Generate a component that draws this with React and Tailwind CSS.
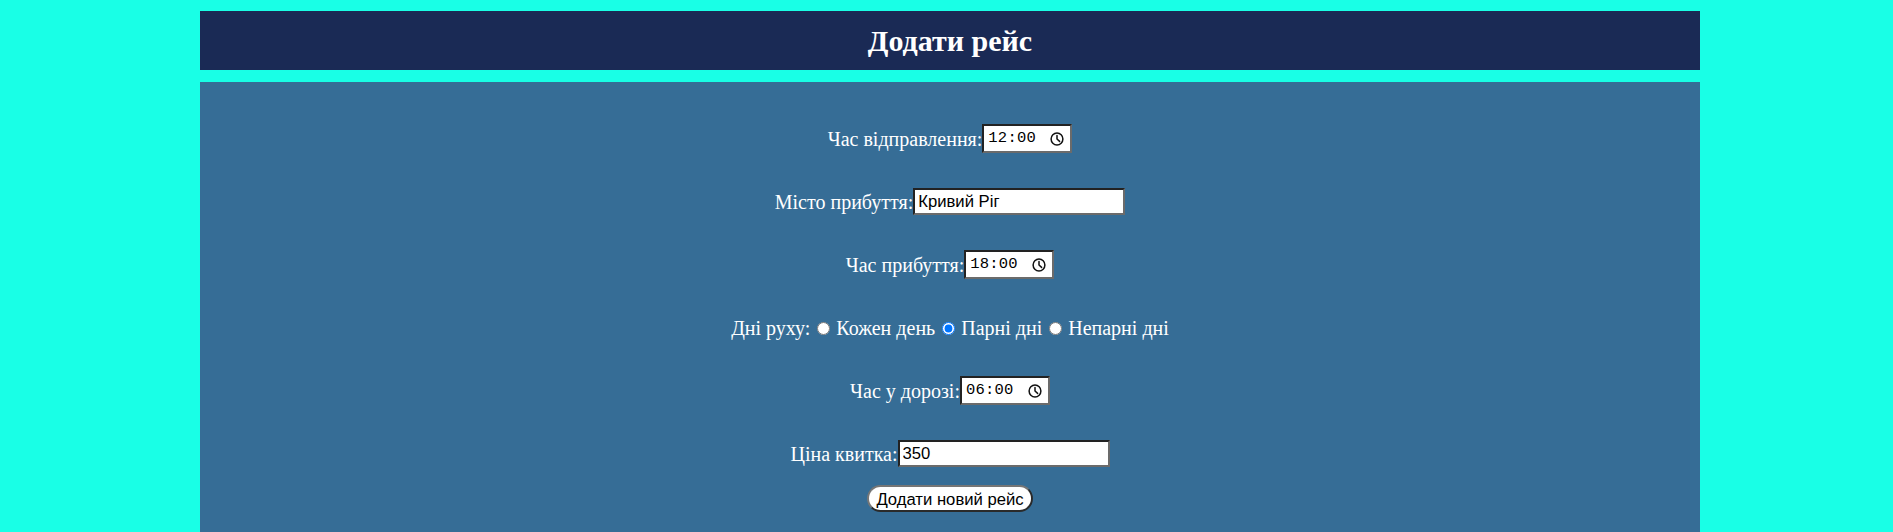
import { useState } from "react";

function ClockIcon() {
  return (
    <svg width="14" height="14" viewBox="0 0 14 14" fill="none" stroke="#111" strokeWidth="1.5">
      <circle cx="7" cy="7" r="5.9" />
      <path d="M7 3.6V7l2.6 2.4" strokeLinecap="round" strokeLinejoin="round" />
    </svg>
  );
}

// time field drawn by hand so it always reads as 24-hour hh:mm
function TimeField({ value }) {
  const [hh, mm] = value.split(":");
  return (
    <div className="w-[90px] h-[29px] bg-white text-black flex items-center pl-[4px] pr-[6px] border-2 border-t-[#222] border-l-[#222] border-r-[#6b6b6b] border-b-[#6b6b6b]">
      <span className="font-['Liberation_Mono',monospace] text-[15.5px] leading-none tracking-[0.2px]">
        {hh}:{mm}
      </span>
      <span className="ml-auto flex items-center">
        <ClockIcon />
      </span>
    </div>
  );
}

export default function App() {
  const [city, setCity] = useState("Кривий Ріг");
  const [days, setDays] = useState("even");
  const [price, setPrice] = useState("350");

  const textInput =
    "w-[212px] h-[27px] bg-white text-black text-[16.67px] font-['Liberation_Sans',Arial,sans-serif] px-[3px] border-2 border-t-[#222] border-l-[#222] border-r-[#6b6b6b] border-b-[#6b6b6b] outline-none";

  return (
    <div className="min-h-screen bg-[#19ffe6] pt-[11px] font-['Liberation_Serif','Times_New_Roman',serif]">
      {/* Header */}
      <div className="mx-[200px] w-[1500px] h-[59px] bg-[#1a2a55] flex items-center justify-center">
        <h1 className="text-white text-[30px] font-bold leading-none">Додати рейс</h1>
      </div>

      {/* Form */}
      <form
        className="mx-[200px] w-[1500px] mt-[12px] bg-[#366d96] pt-[25px] pb-[40px] flex flex-col items-center text-white text-[20px]"
        onSubmit={(e) => e.preventDefault()}
      >
        <div className="h-[63px] flex items-center">
          <label>Час відправлення:</label>
          <TimeField value="12:00" />
        </div>

        <div className="h-[63px] flex items-center">
          <label>Місто прибуття:</label>
          <input type="text" value={city} onChange={(e) => setCity(e.target.value)} className={textInput} />
        </div>

        <div className="h-[63px] flex items-center">
          <label>Час прибуття:</label>
          <TimeField value="18:00" />
        </div>

        <div className="h-[63px] flex items-center">
          <span>Дні руху:</span>
          {[
            ["every", "Кожен день"],
            ["even", "Парні дні"],
            ["odd", "Непарні дні"],
          ].map(([val, text]) => (
            <label key={val} className="flex items-center">
              <input
                type="radio"
                name="days"
                checked={days === val}
                onChange={() => setDays(val)}
                className="w-[13px] h-[13px] ml-[7px] mr-[6px] mt-[2px]"
              />
              {text}
            </label>
          ))}
        </div>

        <div className="h-[63px] flex items-center">
          <label>Час у дорозі:</label>
          <TimeField value="06:00" />
        </div>

        <div className="h-[63px] flex items-center">
          <label>Ціна квитка:</label>
          <input type="text" value={price} onChange={(e) => setPrice(e.target.value)} className={textInput} />
        </div>

        <button
          type="submit"
          className="h-[27px] px-[7px] bg-white text-black rounded-full text-[16.67px] font-['Liberation_Sans',Arial,sans-serif] border-2 border-t-[#767676] border-l-[#767676] border-r-[#2a2a2a] border-b-[#2a2a2a]"
        >
          Додати новий рейс
        </button>
      </form>
    </div>
  );
}
